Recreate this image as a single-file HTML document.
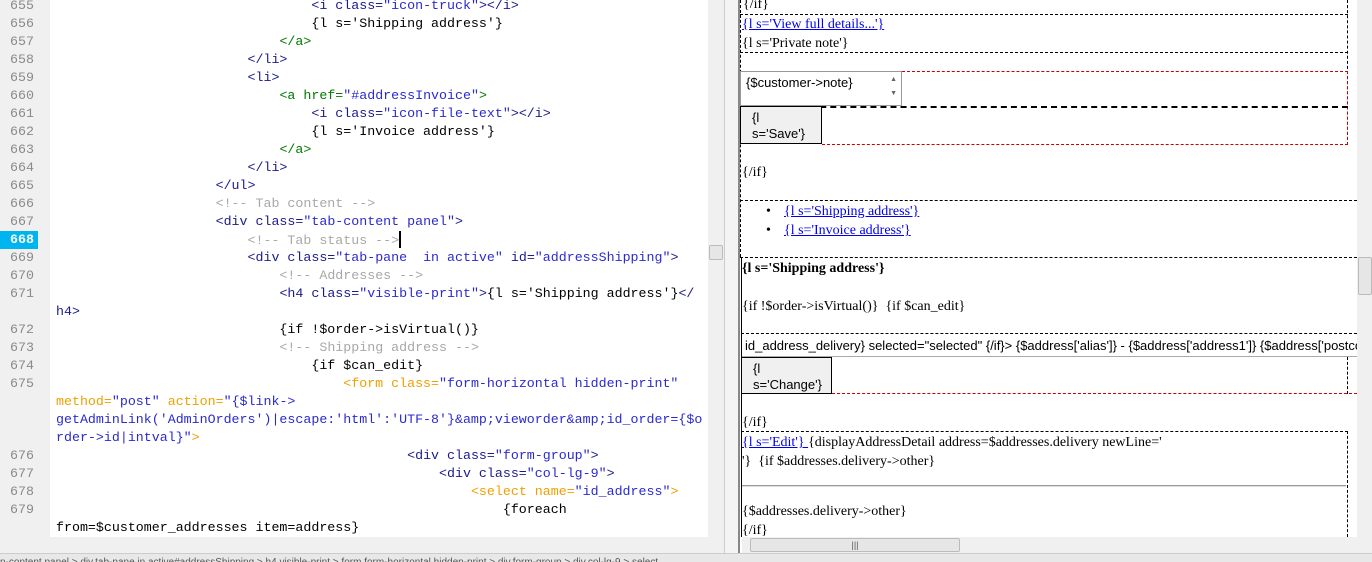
<!DOCTYPE html>
<html><head><meta charset="utf-8"><style>
*{margin:0;padding:0;box-sizing:border-box}
body{width:1372px;height:562px;overflow:hidden;background:#fff;position:relative;font-family:"Liberation Serif",serif}
#gut{position:absolute;left:0;top:0;width:50px;height:537px;background:#f0f0f0}
.ln{position:absolute;left:0;width:34px;text-align:right;font:13.3px/18px "Liberation Mono",monospace;color:#8a8a8a;margin-top:1px}
.hl{background:#00b4f0;color:#fff;font-weight:bold;width:38px;padding-right:4px}
.cl{position:absolute;left:56px;font:13.3px/18px "Liberation Mono",monospace;white-space:pre;color:#000;margin-top:1px}
.t{color:#1a1a8c}.v{color:#2a2ad0}.c{color:#a8a8a8}.g{color:#007a00}.o{color:#f0a000}
.r{position:absolute;font-size:14px;line-height:18px;white-space:nowrap;color:#000;margin-top:1px}
.a{color:#0000ee;text-decoration:underline}
.hd{position:absolute;border-top:1px dashed #000}
.vd{position:absolute;border-left:1px dashed #000}
.btn{position:absolute;background:#f0f0f0;border:1px solid #000;font:13px/18px "Liberation Sans",sans-serif;padding:3px 0 0 11px}
.sb{position:absolute;background:#f0f0f0}
.thumb{position:absolute;background:#e6e6e6;border:1px solid #bbb;border-radius:2px}
</style></head><body>
<div id="gut"></div>
<div class="ln" style="top:-4px">655</div>
<div class="ln" style="top:14px">656</div>
<div class="ln" style="top:32px">657</div>
<div class="ln" style="top:50px">658</div>
<div class="ln" style="top:68px">659</div>
<div class="ln" style="top:86px">660</div>
<div class="ln" style="top:104px">661</div>
<div class="ln" style="top:122px">662</div>
<div class="ln" style="top:140px">663</div>
<div class="ln" style="top:158px">664</div>
<div class="ln" style="top:176px">665</div>
<div class="ln" style="top:194px">666</div>
<div class="ln" style="top:212px">667</div>
<div class="ln hl" style="top:230px">668</div>
<div class="ln" style="top:248px">669</div>
<div class="ln" style="top:266px">670</div>
<div class="ln" style="top:284px">671</div>
<div class="ln" style="top:320px">672</div>
<div class="ln" style="top:338px">673</div>
<div class="ln" style="top:356px">674</div>
<div class="ln" style="top:374px">675</div>
<div class="ln" style="top:446px">676</div>
<div class="ln" style="top:464px">677</div>
<div class="ln" style="top:482px">678</div>
<div class="ln" style="top:500px">679</div>

<div class="cl" style="top:-4px">                                <span class="t">&lt;i class=</span><span class="v">"icon-truck"</span><span class="t">&gt;&lt;/i&gt;</span></div>
<div class="cl" style="top:14px">                                {l s='Shipping address'}</div>
<div class="cl" style="top:32px">                            <span class="g">&lt;/a&gt;</span></div>
<div class="cl" style="top:50px">                        <span class="t">&lt;/li&gt;</span></div>
<div class="cl" style="top:68px">                        <span class="t">&lt;li&gt;</span></div>
<div class="cl" style="top:86px">                            <span class="g">&lt;a href=</span><span class="v">"#addressInvoice"</span><span class="g">&gt;</span></div>
<div class="cl" style="top:104px">                                <span class="t">&lt;i class=</span><span class="v">"icon-file-text"</span><span class="t">&gt;&lt;/i&gt;</span></div>
<div class="cl" style="top:122px">                                {l s='Invoice address'}</div>
<div class="cl" style="top:140px">                            <span class="g">&lt;/a&gt;</span></div>
<div class="cl" style="top:158px">                        <span class="t">&lt;/li&gt;</span></div>
<div class="cl" style="top:176px">                    <span class="t">&lt;/ul&gt;</span></div>
<div class="cl" style="top:194px">                    <span class="c">&lt;!-- Tab content --&gt;</span></div>
<div class="cl" style="top:212px">                    <span class="t">&lt;div class=</span><span class="v">"tab-content panel"</span><span class="t">&gt;</span></div>
<div class="cl" style="top:230px">                        <span class="c">&lt;!-- Tab status --&gt;</span><span style="display:inline-block;width:2px;height:17px;background:#000;vertical-align:-4px"></span></div>
<div class="cl" style="top:248px">                        <span class="t">&lt;div class=</span><span class="v">"tab-pane  in active"</span><span class="t"> id=</span><span class="v">"addressShipping"</span><span class="t">&gt;</span></div>
<div class="cl" style="top:266px">                            <span class="c">&lt;!-- Addresses --&gt;</span></div>
<div class="cl" style="top:284px">                            <span class="t">&lt;h4 class=</span><span class="v">"visible-print"</span><span class="t">&gt;</span>{l s='Shipping address'}<span class="t">&lt;/</span></div>
<div class="cl" style="top:302px"><span class="t">h4&gt;</span></div>
<div class="cl" style="top:320px">                            {if !$order-&gt;isVirtual()}</div>
<div class="cl" style="top:338px">                            <span class="c">&lt;!-- Shipping address --&gt;</span></div>
<div class="cl" style="top:356px">                                {if $can_edit}</div>
<div class="cl" style="top:374px">                                    <span class="o">&lt;form class=</span><span class="v">"form-horizontal hidden-print"</span></div>
<div class="cl" style="top:392px"><span class="o">method=</span><span class="v">"post"</span><span class="o"> action=</span><span class="v">"{$link-&gt;</span></div>
<div class="cl" style="top:410px"><span class="v">getAdminLink('AdminOrders')|escape:'html':'UTF-8'}&amp;amp;vieworder&amp;amp;id_order={$o</span></div>
<div class="cl" style="top:428px"><span class="v">rder-&gt;id|intval}"</span><span class="o">&gt;</span></div>
<div class="cl" style="top:446px">                                            <span class="t">&lt;div class=</span><span class="v">"form-group"</span><span class="t">&gt;</span></div>
<div class="cl" style="top:464px">                                                <span class="t">&lt;div class=</span><span class="v">"col-lg-9"</span><span class="t">&gt;</span></div>
<div class="cl" style="top:482px">                                                    <span class="o">&lt;select name=</span><span class="v">"id_address"</span><span class="o">&gt;</span></div>
<div class="cl" style="top:500px">                                                        {foreach</div>
<div class="cl" style="top:518px">from=$customer_addresses item=address}</div>

<div class="sb" style="left:708px;top:0;width:16px;height:537px"></div>
<div class="thumb" style="left:709px;top:245px;width:14px;height:15px"></div>
<div class="sb" style="left:0;top:537px;width:724px;height:16px"></div>
<div class="sb" style="left:724px;top:0;width:16px;height:553px;background:#f4f4f4;border-left:1px solid #ccc;border-right:2px solid #888"></div>

<div class="r" style="left:743px;top:-5px">{/if}</div>
<div class="hd" style="left:740px;top:14px;width:608px"></div>
<div class="vd" style="left:740px;top:0;height:257px"></div>
<div class="vd" style="left:1347px;top:0;height:145px"></div>
<div class="r a" style="left:742px;top:15px">{l s='View full details...'}</div>
<div class="r" style="left:742px;top:34px">{l s='Private note'}</div>
<div class="hd" style="left:740px;top:52px;width:608px"></div>
<div style="position:absolute;left:740px;top:71px;width:162px;height:35px;border:1px solid #999;background:#fff;font:13px/18px 'Liberation Sans',sans-serif;padding:2px 5px">{$customer-&gt;note}<span style="position:absolute;right:4px;top:1px;font-size:7px;color:#666;line-height:14px">▲<br>▼</span></div>
<div class="hd" style="left:902px;top:71px;width:446px;border-color:#c00"></div>
<div class="vd" style="left:1347px;top:71px;height:74px;border-color:#c00"></div>
<div class="hd" style="left:740px;top:106px;width:608px;border-top-width:2px"></div>
<div class="btn" style="left:740px;top:106px;width:82px;height:38px;line-height:16px">{l<br>s='Save'}</div>
<div class="hd" style="left:822px;top:144px;width:526px;border-color:#c00"></div>
<div class="r" style="left:742px;top:163px">{/if}</div>
<div class="hd" style="left:740px;top:200px;width:617px"></div>
<div class="r" style="left:766px;top:202px">•</div>
<div class="r a" style="left:784px;top:202px">{l s='Shipping address'}</div>
<div class="r" style="left:766px;top:221px">•</div>
<div class="r a" style="left:784px;top:221px">{l s='Invoice address'}</div>
<div class="hd" style="left:740px;top:257px;width:617px"></div>
<div style="position:absolute;left:741px;top:257px;width:1px;height:280px;background:#000"></div>
<div class="r" style="left:742px;top:259px;font-weight:bold">{l s='Shipping address'}</div>
<div class="r" style="left:742px;top:297px">{if !$order-&gt;isVirtual()} &nbsp;{if $can_edit}</div>
<div class="hd" style="left:741px;top:333px;width:616px"></div>
<div style="position:absolute;left:742px;top:337px;width:615px;height:20px;border-bottom:1px solid #aaa;font:13px/18px 'Liberation Sans',sans-serif;padding-left:3px;white-space:nowrap;overflow:hidden">id_address_delivery} selected="selected" {/if}&gt; {$address['alias']} - {$address['address1']} {$address['postcode']}</div>
<div class="btn" style="left:741px;top:357px;width:91px;height:37px;line-height:16px">{l<br>s='Change'}</div>
<div class="vd" style="left:1347px;top:357px;height:37px"></div>
<div class="hd" style="left:832px;top:393px;width:525px;border-color:#c00"></div>
<div class="r" style="left:742px;top:413px">{/if}</div>
<div class="hd" style="left:741px;top:431px;width:607px"></div>
<div class="vd" style="left:1347px;top:431px;height:106px"></div>
<div class="r" style="left:742px;top:433px"><span class="a">{l s='Edit'} </span> {displayAddressDetail address=$addresses.delivery newLine='</div>
<div class="r" style="left:742px;top:452px">'} &nbsp;{if $addresses.delivery-&gt;other}</div>
<div style="position:absolute;left:742px;top:485px;width:604px;height:2px;border-top:1px solid #999;border-bottom:1px solid #ddd"></div>
<div class="r" style="left:742px;top:502px">{$addresses.delivery-&gt;other}</div>
<div class="r" style="left:742px;top:521px">{/if}</div>

<div class="sb" style="left:1357px;top:0;width:15px;height:537px"></div>
<div class="thumb" style="left:1358px;top:257px;width:14px;height:38px"></div>
<div class="sb" style="left:742px;top:537px;width:630px;height:16px"></div>
<div class="thumb" style="left:750px;top:538px;width:210px;height:14px;font:9px/12px sans-serif;color:#555;text-align:center">|||</div>
<div class="sb" style="left:0;top:553px;width:1372px;height:9px;background:#e8e8e8;border-top:1px solid #ccc;overflow:hidden"><div style="position:absolute;left:0;top:4px;font:10px/10px 'Liberation Sans',sans-serif;color:#555;white-space:nowrap">n-content panel &gt; div.tab-pane.in.active#addressShipping &gt; h4.visible-print &gt; form.form-horizontal.hidden-print &gt; div.form-group &gt; div.col-lg-9 &gt; select</div></div>
</body></html>
